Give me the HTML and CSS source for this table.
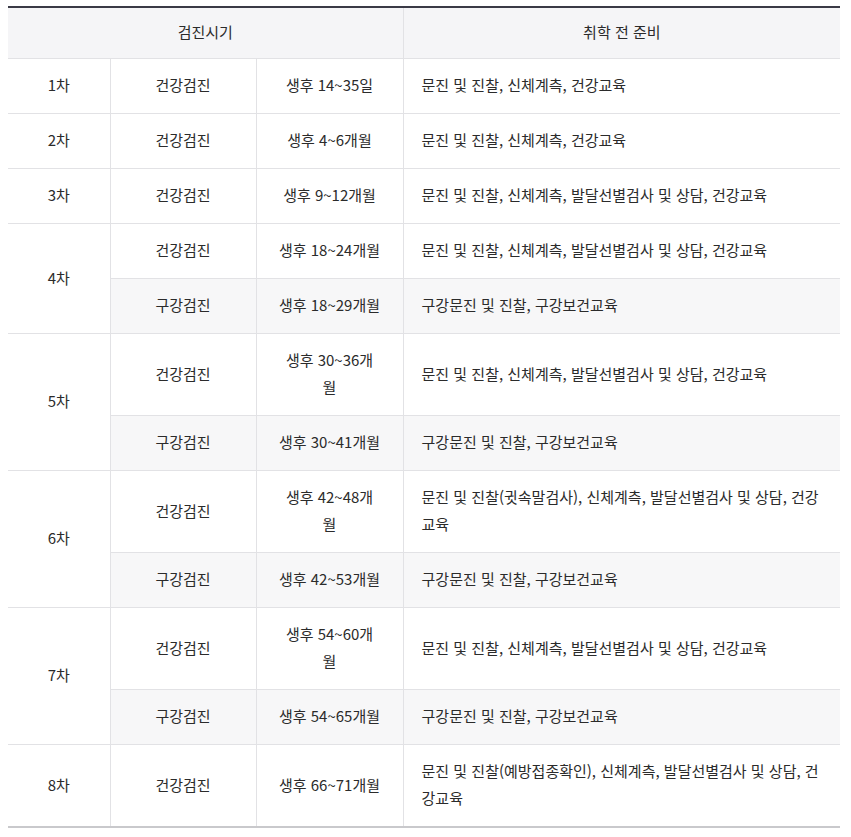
FILE: index.html
```html
<!DOCTYPE html>
<html lang="ko">
<head>
<meta charset="utf-8">
<title>검진시기</title>
<link rel="stylesheet" href="styles.css">
</head>
<body>
<table class="schedule">
  <colgroup>
    <col class="c1"><col class="c2"><col class="c3"><col class="c4">
  </colgroup>
  <thead>
    <tr><th colspan="3">검진시기</th><th>취학 전 준비</th></tr>
  </thead>
  <tbody>
    <tr><td>1차</td><td>건강검진</td><td>생후 14~35일</td><td class="desc">문진 및 진찰, 신체계측, 건강교육</td></tr>
    <tr><td>2차</td><td>건강검진</td><td>생후 4~6개월</td><td class="desc">문진 및 진찰, 신체계측, 건강교육</td></tr>
    <tr><td>3차</td><td>건강검진</td><td>생후 9~12개월</td><td class="desc">문진 및 진찰, 신체계측, 발달선별검사 및 상담, 건강교육</td></tr>
    <tr><td rowspan="2">4차</td><td>건강검진</td><td>생후 18~24개월</td><td class="desc">문진 및 진찰, 신체계측, 발달선별검사 및 상담, 건강교육</td></tr>
    <tr class="oral"><td>구강검진</td><td>생후 18~29개월</td><td class="desc">구강문진 및 진찰, 구강보건교육</td></tr>
    <tr><td rowspan="2">5차</td><td>건강검진</td><td>생후 30~36개<br>월</td><td class="desc">문진 및 진찰, 신체계측, 발달선별검사 및 상담, 건강교육</td></tr>
    <tr class="oral"><td>구강검진</td><td>생후 30~41개월</td><td class="desc">구강문진 및 진찰, 구강보건교육</td></tr>
    <tr><td rowspan="2">6차</td><td>건강검진</td><td>생후 42~48개<br>월</td><td class="desc">문진 및 진찰(귓속말검사), 신체계측, 발달선별검사 및 상담, 건강<br>교육</td></tr>
    <tr class="oral"><td>구강검진</td><td>생후 42~53개월</td><td class="desc">구강문진 및 진찰, 구강보건교육</td></tr>
    <tr><td rowspan="2">7차</td><td>건강검진</td><td>생후 54~60개<br>월</td><td class="desc">문진 및 진찰, 신체계측, 발달선별검사 및 상담, 건강교육</td></tr>
    <tr class="oral"><td>구강검진</td><td>생후 54~65개월</td><td class="desc">구강문진 및 진찰, 구강보건교육</td></tr>
    <tr><td>8차</td><td>건강검진</td><td>생후 66~71개월</td><td class="desc">문진 및 진찰(예방접종확인), 신체계측, 발달선별검사 및 상담, 건<br>강교육</td></tr>
  </tbody>
</table>
</body>
</html>
```
FILE: styles.css
```css
html, body {
  margin: 0;
  padding: 0;
  background: #ffffff;
}
body {
  padding: 6px 0 0 8px;
  font-family: "Noto Sans CJK KR", "Noto Sans", sans-serif;
  color: #2b2b2b;
  font-size: 15px;
}
.schedule {
  width: 832px;
  border-collapse: collapse;
  table-layout: fixed;
  border-top: 2px solid #3a3a46;
  border-bottom: 2px solid #c9c9cc;
}
.c1 { width: 102px; }
.c2 { width: 146px; }
.c3 { width: 147px; }
.c4 { width: 437px; }
.schedule th {
  background: #f5f5f7;
  font-weight: 400;
  line-height: 27px;
  padding: 10px 20px 13px;
  text-align: center;
  border-bottom: 1px solid #e2e2e5;
  border-left: 1px solid #e2e2e5;
}
.schedule th:first-child { border-left: none; }
.schedule td {
  line-height: 27px;
  padding: 12px 8px 15px;
  text-align: center;
  vertical-align: middle;
  border-bottom: 1px solid #e2e2e5;
  border-left: 1px solid #e2e2e5;
}
.schedule tbody tr > td:first-child[rowspan],
.schedule tbody tr:not(.oral) > td:first-child {
  border-left: none;
}
.schedule td.desc {
  text-align: left;
  padding: 12px 12px 15px 18px;
}
.schedule tr.oral td {
  background: #f7f7f8;
}
```
